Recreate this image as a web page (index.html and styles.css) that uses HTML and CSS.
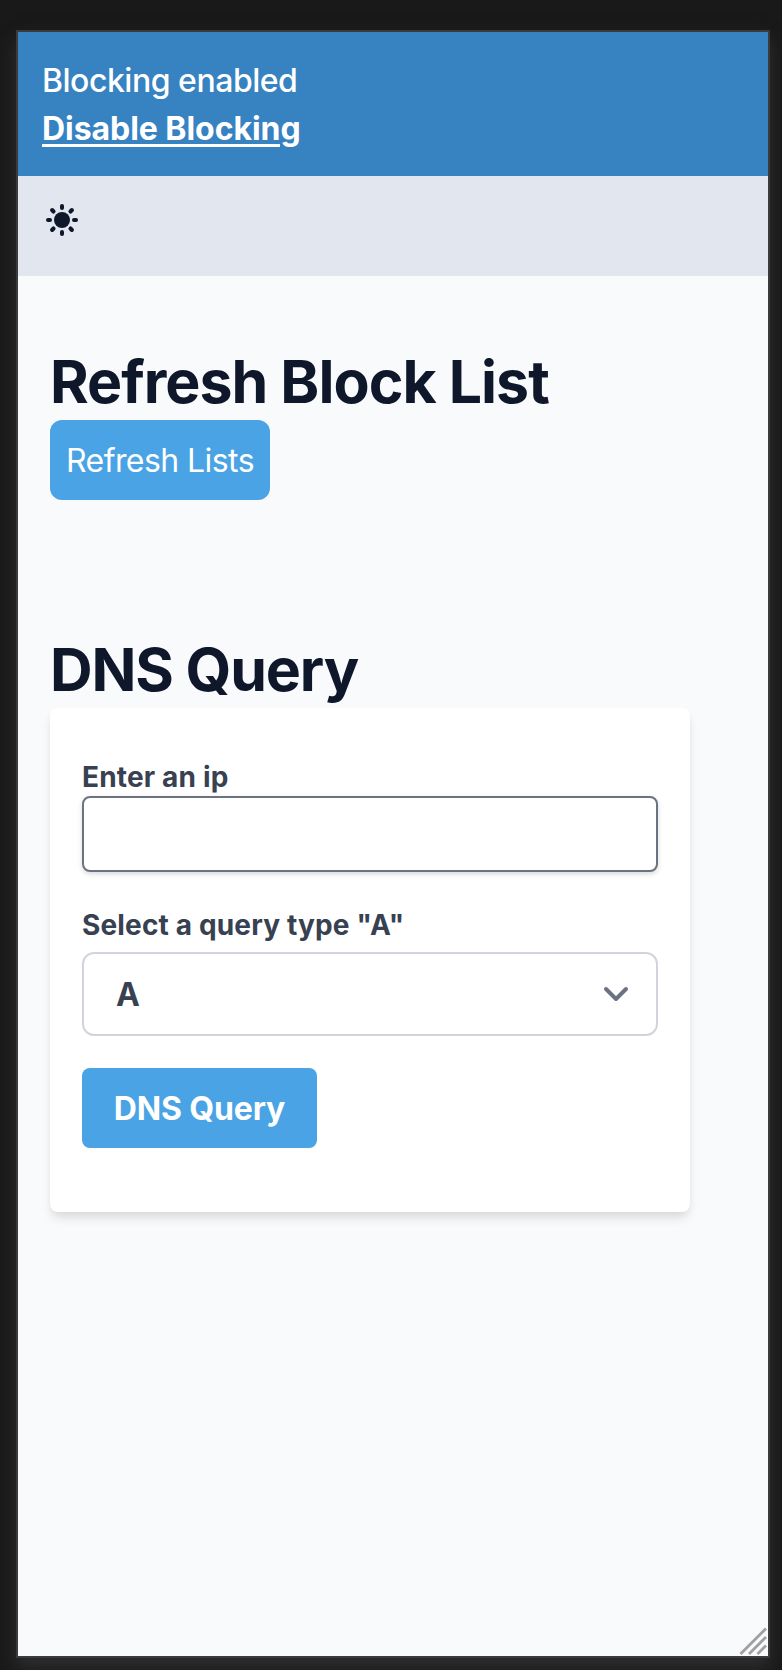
FILE: index.html
```
<!DOCTYPE html>
<html lang="en">
<head>
<meta charset="utf-8">
<title>DNS Blocker</title>
<link rel="stylesheet" href="styles.css">
</head>
<body>
<div class="frame">
  <header class="banner">
    <p class="banner-status">Blocking enabled</p>
    <a class="banner-link" href="#">Disable Blocking</a>
  </header>
  <nav class="toolbar">
    <svg class="sun" viewBox="0 0 32 32" aria-label="Toggle theme">
      <circle cx="16" cy="16" r="8"/>
      <g>
        <rect x="14" y="0" width="4" height="6" rx="2"/>
        <rect x="14" y="26" width="4" height="6" rx="2"/>
        <rect x="0" y="14" width="6" height="4" rx="2"/>
        <rect x="26" y="14" width="6" height="4" rx="2"/>
      </g>
      <g transform="rotate(45 16 16)">
        <rect x="13.9" y="0" width="4.2" height="6" rx="2"/>
        <rect x="13.9" y="26" width="4.2" height="6" rx="2"/>
        <rect x="0" y="13.9" width="6" height="4.2" rx="2"/>
        <rect x="26" y="13.9" width="6" height="4.2" rx="2"/>
      </g>
    </svg>
  </nav>
  <main class="content">
    <section class="refresh">
      <h1 class="title title-refresh">Refresh Block List</h1>
      <button class="btn btn-refresh" type="button">Refresh Lists</button>
    </section>
    <section class="query">
      <h1 class="title title-query">DNS Query</h1>
      <form class="card">
        <label class="label label-ip" for="ip">Enter an ip</label>
        <input class="input" id="ip" type="text">
        <span class="label label-type">Select a query type "A"</span>
        <div class="select">
          <span class="select-value">A</span>
          <svg class="chevron" viewBox="0 0 24 14"><path d="M2 2l10 10L22 2"/></svg>
        </div>
        <button class="btn btn-query" type="button">DNS Query</button>
      </form>
    </section>
  </main>
  <svg class="grip" viewBox="0 0 28 28"><path d="M1.5 27L27 1.5M10 27L27 10M18.5 27L27 18.5"/></svg>
</div>
</body>
</html>
```
FILE: styles.css
```
* { box-sizing: border-box; }
body {
  margin: 0;
  height: 1670px;
  padding: 30px 0 0 16px;
  background: #19191a;
  font-family: Inter, "Liberation Sans", sans-serif;
  font-size: 32px;
  line-height: 48px;
  overflow: hidden;
}
.frame {
  position: relative;
  width: 754px;
  height: 1628px;
  border: 2px solid #3b3b3c;
  background: #f9fafc;
  box-shadow: 0 10px 18px rgba(70, 70, 72, .5);
}
.banner {
  height: 144px;
  padding: 25px 24px 0;
  background: #3782c1;
  color: #fff;
}
.banner-status { margin: 0; font-weight: 500; letter-spacing: -.48px; }
.banner-link {
  display: block;
  width: max-content;
  color: #fff;
  font-weight: 700;
  letter-spacing: -.05px;
  text-decoration: underline;
  text-decoration-thickness: 3px;
  text-underline-offset: 4px;
}
.toolbar { height: 100px; padding: 28px; background: #e2e7ef; }
.sun { display: block; width: 32px; height: 32px; fill: #0f172a; }
.content { padding: 72px 32px 0; }
.title {
  margin: 0;
  height: 72px;
  color: #0f172a;
  font-size: 59px;
  font-weight: 700;
  line-height: 68px;
  white-space: nowrap;
}
.title-refresh { letter-spacing: -.97px; }
.title-query { letter-spacing: -1.15px; }
.btn {
  display: block;
  height: 80px;
  padding: 2px 0 0;
  border: 0;
  background: #49a3e4;
  color: #fff;
  font: inherit;
  line-height: 78px;
  white-space: nowrap;
}
.btn-refresh { width: 220px; border-radius: 12px; letter-spacing: -.57px; }
.query { margin-top: 136px; }
.card {
  display: flex;
  flex-direction: column;
  align-items: flex-start;
  width: 640px;
  height: 504px;
  padding: 48px 32px 0;
  border-radius: 8px;
  background: #fff;
  box-shadow: 0 8px 12px -2px rgba(0, 0, 0, .1), 0 4px 8px -2px rgba(0, 0, 0, .06);
}
.label {
  height: 40px;
  color: #374151;
  font-size: 28px;
  font-weight: 700;
  line-height: 42px;
  letter-spacing: .16px;
  white-space: nowrap;
}
.input {
  width: 576px;
  height: 76px;
  padding: 0 24px;
  border: 2px solid #6b7280;
  border-radius: 8px;
  background: #fff;
  font: inherit;
  box-shadow: 0 2px 6px rgba(0, 0, 0, .1), 0 2px 4px rgba(0, 0, 0, .06);
}
.label-type { margin: 32px 0 8px; }
.select {
  display: flex;
  align-items: center;
  justify-content: space-between;
  width: 576px;
  height: 84px;
  padding: 0 28px 0 32px;
  border: 2px solid #d1d5db;
  border-radius: 12px;
  color: #374151;
  font-weight: 700;
}
.select-value { padding-top: 2px; }
.chevron { width: 24px; height: 14px; fill: none; stroke: #6b7280; stroke-width: 4; stroke-linecap: round; stroke-linejoin: round; overflow: visible; }
.btn-query { width: 235px; margin-top: 32px; border-radius: 8px; font-weight: 700; letter-spacing: -.15px; }
.grip {
  position: absolute;
  right: 1px;
  bottom: 1px;
  width: 28px;
  height: 28px;
  fill: none;
  stroke: #a0a0a0;
  stroke-width: 2.8;
}
```
